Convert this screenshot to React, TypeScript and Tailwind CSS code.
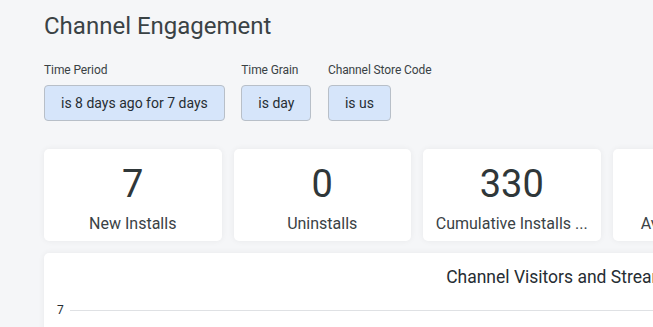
import React from "react";

const filters = [
  { label: "Time Period", value: "is 8 days ago for 7 days" },
  { label: "Time Grain", value: "is day" },
  { label: "Channel Store Code", value: "is us" },
];

const tiles = [
  { value: "7", label: "New Installs" },
  { value: "0", label: "Uninstalls" },
  { value: "330", label: "Cumulative Installs ..." },
  { value: "0", label: "Average Streams" },
  { value: "0", label: "Streams" },
];

export default function App() {
  return (
    <div
      className="w-[653px] h-[327px] overflow-hidden bg-[#f5f6f8] text-[#3a4245]"
      style={{ fontFamily: "Roboto, 'Liberation Sans', sans-serif" }}
    >
      <div className="w-[1100px] pl-[44px] pt-[11px]">
        <h1 className="text-[24px] leading-[30px] font-normal text-[#3a4245]">Channel Engagement</h1>
        <div className="mt-[22px] flex items-start gap-[16.5px]">
          {filters.map((f) => (
            <div key={f.label} className="flex flex-col items-start">
              <span className="text-[12px] leading-[14px] tracking-[-0.1px] text-[#3a4245]">{f.label}</span>
              <div className="mt-[8px] h-[36px] px-[16px] flex items-center rounded-[4px] border border-[#b8bfc8] bg-[#d6e5fa] text-[14px] text-[#262d33]">
                {f.value}
              </div>
            </div>
          ))}
        </div>
        <div className="mt-[28px] flex gap-[12px]">
          {tiles.map((t, i) => (
            <div
              key={i}
              className="w-[177.5px] h-[92px] shrink-0 rounded-[5px] bg-white shadow-[0_0_6px_rgba(0,0,0,0.06)] flex flex-col items-center pt-[13px]"
            >
              <span className="text-[38px] leading-[44px] text-[#2f3739]">{t.value}</span>
              <span className="mt-[8px] text-[16px] leading-[20px] text-[#3a4245] whitespace-nowrap">{t.label}</span>
            </div>
          ))}
        </div>
        <div className="mt-[12px] w-[1034px] h-[120px] rounded-[5px] bg-white shadow-[0_0_6px_rgba(0,0,0,0.06)] flex flex-col">
          <div className="pt-[13px] text-center text-[17.5px] leading-[22px] text-[#262d33]">Channel Visitors and Streams</div>
          <div className="mt-[13px] flex items-center pl-[13px]">
            <span className="text-[12px] w-[13px] text-[#262d33]">7</span>
            <div className="flex-1 h-px bg-[#dfe1e4]"></div>
          </div>
        </div>
      </div>
    </div>
  );
}
